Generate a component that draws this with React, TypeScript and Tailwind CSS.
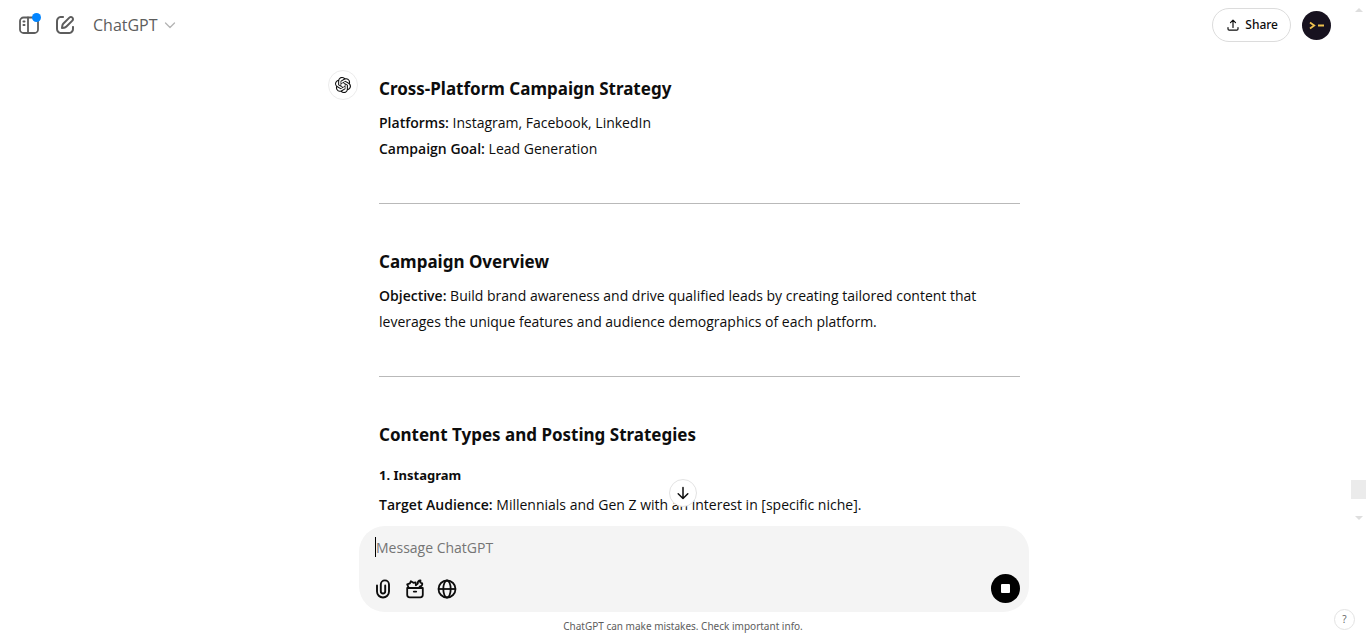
import React from "react";
import { SiOpenai } from "react-icons/si";

function SidebarIcon() {
  return (
    <svg viewBox="0 0 24 24" className="size-6" fill="none" stroke="currentColor" strokeWidth="1.800" strokeLinecap="round" aria-hidden="true">
      <rect x="3" y="4.500" width="18" height="15.500" rx="3.600" />
      <path d="M11 4.500v15.500" />
      <path d="M6.400 8.500h1.200M6.400 12h1.200" strokeWidth="1.800" />
    </svg>
  );
}

function EditIcon() {
  return (
    <svg viewBox="0 0 24 24" className="size-6" fill="currentColor" aria-hidden="true">
      <path d="M15.6729 3.91287C16.8918 2.69392 18.8682 2.69392 20.0871 3.91287C21.3061 5.13182 21.3061 7.10813 20.0871 8.32708L14.1499 14.2643C13.3849 15.0293 12.3925 15.5255 11.3215 15.6785L9.14142 15.9899C8.82983 16.0344 8.51546 15.9297 8.29289 15.7071C8.07033 15.4845 7.96554 15.1701 8.01005 14.8586L8.32149 12.6785C8.47449 11.6075 8.97072 10.615 9.7357 9.85006L15.6729 3.91287ZM18.6729 5.32708C18.235 4.88918 17.525 4.88918 17.0871 5.32708L11.1499 11.2643C10.6909 11.7233 10.3932 12.3187 10.3014 12.9613L10.1785 13.8215L11.0386 13.6986C11.6812 13.6068 12.2767 13.3091 12.7357 12.8501L18.6729 6.91287C19.1108 6.47497 19.1108 5.76499 18.6729 5.32708ZM11 3.99929C11.0004 4.55157 10.5531 4.99963 10.0008 5.00007C9.00227 5.00084 8.29769 5.00827 7.74651 5.06064C7.20685 5.11191 6.88488 5.20117 6.63803 5.32695C6.07354 5.61457 5.6146 6.07351 5.32698 6.63799C5.19279 6.90135 5.10062 7.24904 5.05118 7.8542C5.00078 8.47105 5 9.26336 5 10.4V13.6C5 14.7366 5.00078 15.5289 5.05118 16.1457C5.10062 16.7509 5.19279 17.0986 5.32698 17.3619C5.6146 17.9264 6.07354 18.3854 6.63803 18.673C6.90138 18.8072 7.24907 18.8993 7.85424 18.9488C8.47108 18.9992 9.26339 19 10.4 19H13.6C14.7366 19 15.5289 18.9992 16.1458 18.9488C16.7509 18.8993 17.0986 18.8072 17.362 18.673C17.9265 18.3854 18.3854 17.9264 18.673 17.3619C18.7988 17.1151 18.8881 16.7931 18.9393 16.2535C18.9917 15.7023 18.9991 14.9977 18.9999 13.9992C19.0003 13.4469 19.4484 12.9995 20.0007 13C20.553 13.0004 21.0003 13.4485 20.9999 14.0007C20.9991 14.9789 20.9932 15.7808 20.9304 16.4426C20.8664 17.116 20.7385 17.7136 20.455 18.2699C19.9757 19.2107 19.2108 19.9756 18.27 20.455C17.6777 20.7568 17.0375 20.8826 16.3086 20.9421C15.6008 21 14.7266 21 13.6428 21H10.3572C9.27339 21 8.39925 21 7.69138 20.9421C6.96253 20.8826 6.32234 20.7568 5.73005 20.455C4.78924 19.9756 4.02433 19.2107 3.54497 18.2699C3.24318 17.6776 3.11737 17.0374 3.05782 16.3086C2.99998 15.6007 2.99999 14.7266 3 13.6428V10.3572C2.99999 9.27337 2.99998 8.39922 3.05782 7.69134C3.11737 6.96249 3.24318 6.3223 3.54497 5.73001C4.02433 4.7892 4.78924 4.0243 5.73005 3.54493C6.28633 3.26149 6.88399 3.13358 7.55735 3.06961C8.21919 3.00673 9.02103 3.00083 9.99922 3.00007C10.5515 2.99964 10.9996 3.447 11 3.99929Z" />
    </svg>
  );
}

function ToolboxIcon() {
  return (
    <svg viewBox="0 0 24 24" className="size-6" fill="none" stroke="currentColor" strokeWidth="1.800" strokeLinecap="round" strokeLinejoin="round" aria-hidden="true">
      <path d="M4.200 11h15.600v6.800a2.500 2.500 0 0 1-2.500 2.500H6.700a2.500 2.500 0 0 1-2.500-2.500z" />
      <path d="M10.800 14.600h2.400" />
      <path d="M5.600 10.500 4.200 7.300l2.700-.9 1-2.200 2.500 1.600 2.200-.5.200 2" />
      <path d="m12.800 8.200 2-1.600c-.3-1.900.8-3.200 2.700-3.100l-.3 2 2 .8c.4 1.700-.6 2.900-2.200 3l-.8 1.200" />
    </svg>
  );
}

function Divider() {
  return <hr className="mt-[41px] mb-[45px] border-t border-[#b9b9b9]" />;
}

const heading = "mb-2 font-['Noto_Sans',sans-serif] text-[17px] leading-[26px] font-bold";

export default function App() {
  return (
    <div className="flex h-screen flex-col overflow-hidden bg-white font-['Open_Sans','Noto_Sans',sans-serif] text-sm text-[#0d0d0d]">
      <div className="flex min-h-0 flex-1">
        <div className="flex min-w-0 flex-1 flex-col">
          <header className="flex h-[50px] shrink-0 items-center justify-between pr-5 pl-[17px]">
            <div className="flex items-center text-[#5d5d5d]">
              <button type="button" aria-label="Open sidebar" className="relative">
                <SidebarIcon />
                <span className="absolute -top-0 right-0 size-[9px] rounded-full bg-[#0285ff]" />
              </button>
              <button type="button" aria-label="New chat" className="ml-3">
                <EditIcon />
              </button>
              <button type="button" className="ml-4 flex items-center gap-1.5 text-base">
                ChatGPT
                <svg viewBox="0 0 12 12" className="size-3 text-[#b4b4b4]" fill="none" stroke="currentColor" strokeWidth="1.300" strokeLinecap="round" strokeLinejoin="round" aria-hidden="true">
                  <path d="M1.500 4 6 8.500 10.500 4" />
                </svg>
              </button>
            </div>
            <div className="flex items-center gap-[11px]">
              <button type="button" className="flex h-[34px] items-center gap-1 rounded-full border border-[#dcdcdc] px-3 font-['Noto_Sans',sans-serif] text-xs font-medium">
                <svg viewBox="0 0 16 16" className="size-4" fill="none" stroke="currentColor" strokeWidth="1.200" strokeLinecap="round" strokeLinejoin="round" aria-hidden="true">
                  <path d="M8 10.500V3.500M5.500 5.700 8 3.200l2.500 2.500M3 10.500v1.500c0 .8.400 1.200 1.200 1.200h7.600c.8 0 1.200-.4 1.200-1.200v-1.500" />
                </svg>
                Share
              </button>
              <button type="button" aria-label="Account" className="size-[29px] rounded-full bg-[#17121f]">
                <svg viewBox="0 0 29 29" fill="none" stroke="#eec14e" strokeWidth="1.800" aria-hidden="true">
                  <path d="m8 11.500 4.200 3L8 17.500M16 14.500h6" />
                </svg>
              </button>
            </div>
          </header>

          <main className="min-h-0 flex-1 overflow-hidden">
            <article className="mx-auto flex w-full max-w-[695px] gap-[21px]">
              <div className="mt-5 flex size-[30px] shrink-0 items-center justify-center rounded-full border border-[#ececec]">
                <SiOpenai className="size-4" aria-hidden="true" />
              </div>
              <div className="mr-[3px] min-w-0 flex-1 pt-[26px] leading-[26px]">
                <h3 className={heading}>Cross-Platform Campaign Strategy</h3>
                <p>
                  <strong className="font-semibold">Platforms:</strong> Instagram, Facebook, LinkedIn
                  <br />
                  <strong className="font-semibold">Campaign Goal:</strong> Lead Generation
                </p>
                <Divider />
                <h3 className={heading}>Campaign Overview</h3>
                <p>
                  <strong className="font-semibold">Objective:</strong> Build brand awareness and drive qualified leads by creating
                  tailored content that leverages the unique features and audience demographics of each platform.
                </p>
                <Divider />
                <h3 className={heading}>Content Types and Posting Strategies</h3>
                <h4 className="mt-3.5 mb-1 font-['Noto_Sans',sans-serif] text-[13px] leading-[26px] font-bold">1. Instagram</h4>
                <p>
                  <strong className="font-semibold">Target Audience:</strong> Millennials and Gen Z with an interest in [specific niche].
                </p>
              </div>
            </article>
          </main>
        </div>

        <div className="flex w-[15px] shrink-0 flex-col items-center pt-2 pb-1.5" aria-hidden="true">
          <svg viewBox="0 0 8 4" className="h-1 w-2 fill-[#dedede]"><path d="M0 4 4 0l4 4z" /></svg>
          <div className="mt-auto mb-[17px] h-[19px] w-full bg-[#ebebeb]" />
          <svg viewBox="0 0 8 4" className="h-1 w-2 fill-[#dedede]"><path d="M0 0l4 4 4-4z" /></svg>
        </div>
      </div>

      <footer className="relative shrink-0">
        <button type="button" aria-label="Scroll to bottom" className="absolute -top-[47px] left-1/2 flex size-7 -translate-x-1/2 items-center justify-center rounded-full border border-[#e3e3e3] bg-white">
          <svg viewBox="0 0 16 16" className="size-4" fill="none" stroke="currentColor" strokeWidth="1.500" strokeLinecap="round" strokeLinejoin="round" aria-hidden="true">
            <path d="M8 2.500v11M3.200 8.800 8 13.500l4.800-4.700" />
          </svg>
        </button>
        <div className="mx-auto w-full max-w-[692px] pl-[22px]">
          <form className="flex h-[86px] flex-col justify-between rounded-[26px] bg-[#f4f4f4] pt-[9px] pr-[9px] pb-[9px] pl-4">
            <div className="flex items-center">
              <span className="h-5 w-px bg-black" aria-hidden="true" />
              <input type="text" aria-label="Message ChatGPT" placeholder="Message ChatGPT" className="h-6 flex-1 bg-transparent outline-none placeholder:text-[#757575]" />
            </div>
            <div className="flex items-center justify-between">
              <div className="-ml-1 flex gap-2">
                <button type="button" aria-label="Attach files">
                  <svg viewBox="0 0 24 24" className="size-6" fill="none" stroke="currentColor" strokeWidth="1.900" strokeLinecap="round" aria-hidden="true">
                    <path d="M6 8.500v6a6 6 0 0 0 12 0V7.500a4.100 4.100 0 0 0-8.200 0v6.800a2.200 2.200 0 0 0 4.400 0V8.500" />
                  </svg>
                </button>
                <button type="button" aria-label="View tools">
                  <ToolboxIcon />
                </button>
                <button type="button" aria-label="Search the web">
                  <svg viewBox="0 0 24 24" className="size-6" fill="none" stroke="currentColor" strokeWidth="1.800" aria-hidden="true">
                    <circle cx="12" cy="12" r="8.500" />
                    <ellipse cx="12" cy="12" rx="3.700" ry="8.500" />
                    <path d="M3.500 12h17" />
                  </svg>
                </button>
              </div>
              <button type="button" aria-label="Stop generating" className="flex size-[29px] items-center justify-center rounded-full bg-black">
                <span className="size-[9px] rounded-[1px] bg-white" />
              </button>
            </div>
          </form>
        </div>
        <p className="flex h-[29px] items-center justify-center font-['Noto_Sans',sans-serif] text-[10px] text-[#5d5d5d]">
          ChatGPT can make mistakes. Check important info.
        </p>
        <button type="button" aria-label="Help" className="absolute right-[11px] bottom-[11px] flex size-[21px] items-center justify-center rounded-full border border-[#e3e3e3] text-[10px] text-[#5d5d5d]">
          ?
        </button>
      </footer>
    </div>
  );
}
